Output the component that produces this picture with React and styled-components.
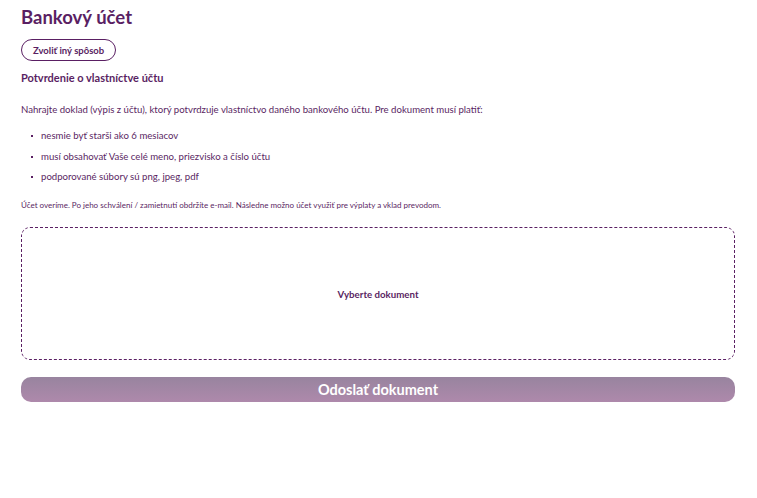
import styled, { createGlobalStyle } from "styled-components";

const purple = "#5a1f63";

const GlobalStyle = createGlobalStyle`
  body {
    margin: 0;
    background: #fff;
    font-family: Lato, "Open Sans", sans-serif;
    color: ${purple};
  }
`;

const Page = styled.div`
  padding: 6px 22px 0 21px;
  display: flex;
  flex-direction: column;
`;

const Title = styled.h1`
  margin: 0;
  font-size: 18.5px;
  font-weight: 700;
  line-height: 22px;
`;

const OutlineButton = styled.button`
  align-self: flex-start;
  margin-top: 11px;
  height: 22px;
  padding: 0 11px;
  border: 1px solid ${purple};
  border-radius: 12px;
  background: #fff;
  color: ${purple};
  font-family: inherit;
  font-size: 9.5px;
  font-weight: 700;
`;

const Subtitle = styled.h2`
  margin: 10px 0 0;
  font-size: 11px;
  font-weight: 700;
  line-height: 14px;
`;

const Text = styled.p`
  margin: 18px 0 0;
  font-size: 9.6px;
  line-height: 14px;
`;

const List = styled.ul`
  margin: 12px 0 0;
  padding: 0 0 0 20px;
  display: flex;
  flex-direction: column;
  gap: 6.5px;
  list-style: none;
`;

const Item = styled.li`
  position: relative;
  font-size: 9.6px;
  line-height: 14px;
  &::before {
    content: "";
    position: absolute;
    left: -10px;
    top: 6px;
    width: 2px;
    height: 2px;
    background: ${purple};
  }
`;

const Note = styled.p`
  margin: 15px 0 0;
  font-size: 8px;
  line-height: 12px;
`;

const DropZone = styled.div`
  margin-top: 16px;
  height: 131px;
  border: 1px dashed ${purple};
  border-radius: 9px;
  display: flex;
  align-items: center;
  justify-content: center;
  font-size: 9.7px;
  font-weight: 700;
`;

const SubmitButton = styled.button`
  margin-top: 17px;
  height: 25px;
  border: 0;
  border-radius: 10px;
  background: linear-gradient(#98849f, #ae89ab);
  color: #fff;
  font-family: inherit;
  font-size: 14.5px;
  font-weight: 700;
`;

const requirements = [
  "nesmie byť starši ako 6 mesiacov",
  "musí obsahovať Vaše celé meno, priezvisko a číslo účtu",
  "podporované súbory sú png, jpeg, pdf",
];

export default function App() {
  return (
    <>
      <GlobalStyle />
      <Page>
        <Title>Bankový účet</Title>
        <OutlineButton>Zvoliť iný spôsob</OutlineButton>
        <Subtitle>Potvrdenie o vlastníctve účtu</Subtitle>
        <Text>
          Nahrajte doklad (výpis z účtu), ktorý potvrdzuje vlastníctvo daného
          bankového účtu. Pre dokument musí platiť:
        </Text>
        <List>
          {requirements.map((r) => (
            <Item key={r}>{r}</Item>
          ))}
        </List>
        <Note>
          Účet overíme. Po jeho schválení / zamietnutí obdržíte e-mail.
          Následne možno účet využiť pre výplaty a vklad prevodom.
        </Note>
        <DropZone>Vyberte dokument</DropZone>
        <SubmitButton>Odoslať dokument</SubmitButton>
      </Page>
    </>
  );
}
